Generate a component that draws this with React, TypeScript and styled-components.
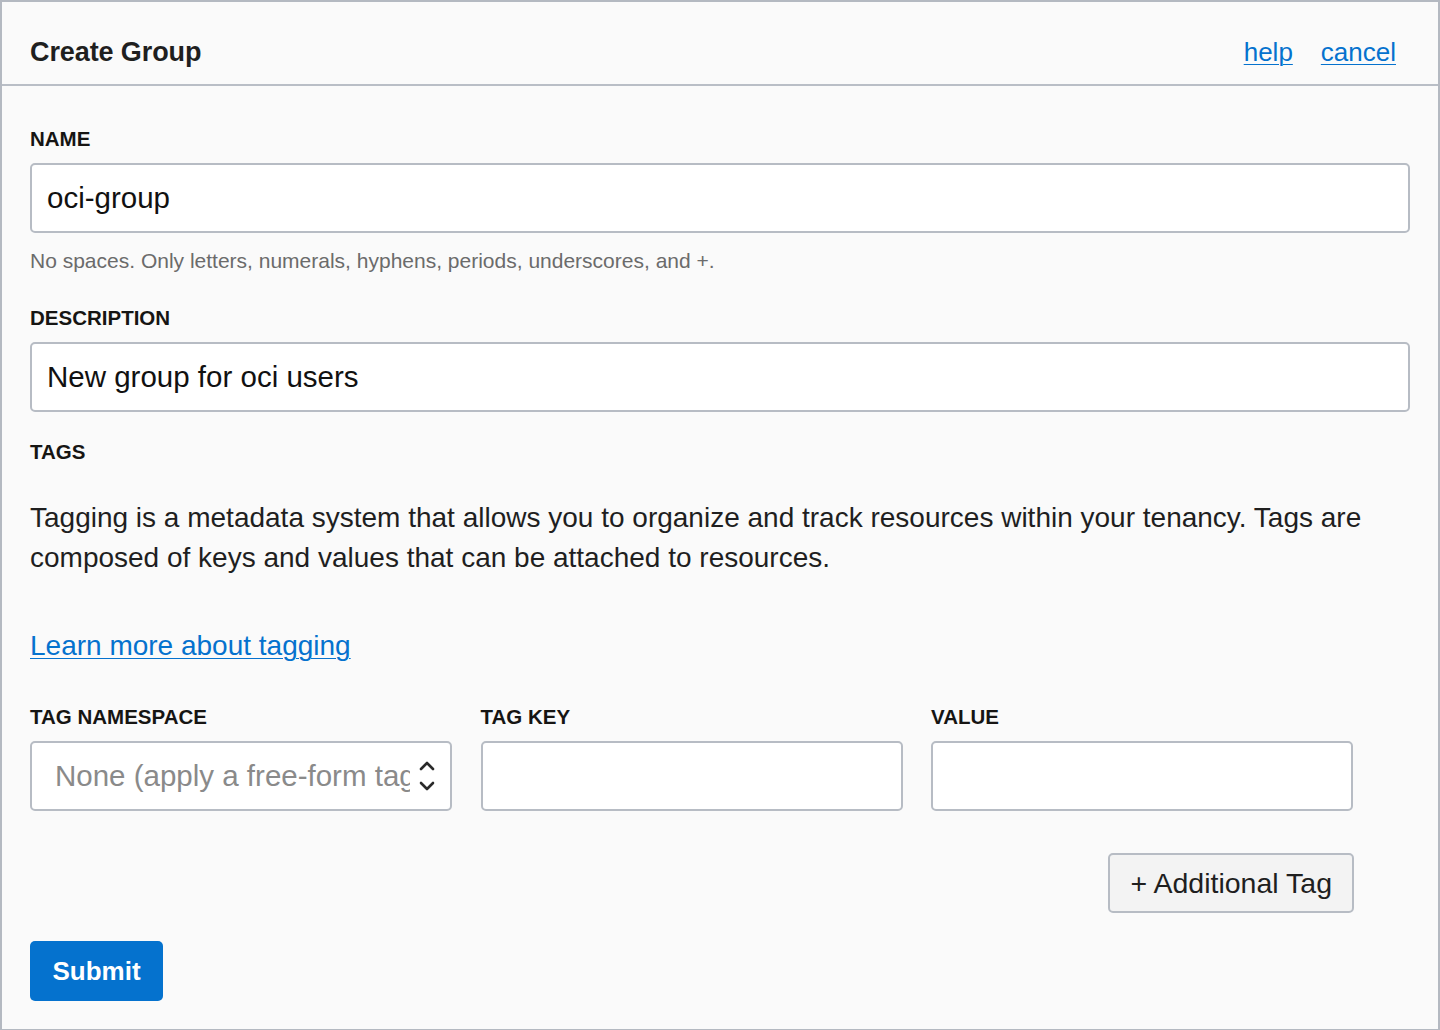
import React from "react";
import styled, { createGlobalStyle } from "styled-components";

const Global = createGlobalStyle`
  html, body { margin: 0; padding: 0; background: #fafafa; }
  * { box-sizing: border-box; }
  body { font-family: "Liberation Sans", Arial, sans-serif; color: #161513; }
`;

const Frame = styled.div`
  width: 1440px;
  height: 1030px;
  border: 2px solid #b4b9c1;
  border-bottom-width: 1px;
  background: #fafafa;
  display: flex;
  flex-direction: column;
`;

const Header = styled.header`
  height: 84px;
  flex: none;
  border-bottom: 2px solid #b9bec6;
  display: flex;
  align-items: center;
  justify-content: space-between;
  padding: 18px 42px 0 28px;
`;

const Title = styled.h1`
  margin: 0;
  font-size: 27px;
  font-weight: 700;
  color: #1f1f1f;
  letter-spacing: -0.1px;
`;

const HeaderLinks = styled.nav`
  display: flex;
  gap: 28px;
`;

const Link = styled.a<{ $size?: number }>`
  color: #0572ce;
  text-decoration: underline;
  text-underline-offset: 3px;
  text-decoration-thickness: 1px;
  font-size: ${(p) => p.$size ?? 26}px;
  line-height: 40px;
  cursor: pointer;
`;

const Body = styled.main`
  padding: 41px 28px 0 28px;
  display: flex;
  flex-direction: column;
`;

const Label = styled.label`
  display: block;
  font-size: 20.5px;
  line-height: 24px;
  font-weight: 700;
  color: #161513;
  margin-bottom: 12px;
`;

const TextInput = styled.div<{ $muted?: boolean }>`
  height: 70px;
  border: 2px solid #b7bcc4;
  border-radius: 5px;
  background: #ffffff;
  display: flex;
  align-items: center;
  padding: 0 15px;
  font-size: 29.5px;
  color: ${(p) => (p.$muted ? "#8a8a8a" : "#111111")};
`;

const Hint = styled.p`
  margin: 16px 0 0;
  font-size: 21px;
  line-height: 24px;
  color: #6b6b6b;
`;

const Field = styled.div<{ $mt?: number }>`
  margin-top: ${(p) => p.$mt ?? 0}px;
`;

const Paragraph = styled.p`
  margin: 34px 0 0;
  font-size: 28px;
  line-height: 40px;
  color: #1f1f1f;
`;

const LearnRow = styled.div`
  margin-top: 48px;
`;

const TagGrid = styled.div`
  margin-top: 39px;
  display: grid;
  grid-template-columns: repeat(3, 422px);
  column-gap: 28.5px;
`;

const Select = styled(TextInput)`
  padding: 0 14px 0 23px;
  justify-content: space-between;
  gap: 8px;
`;

const SelectText = styled.span`
  white-space: nowrap;
  overflow: hidden;
  flex: 1;
  min-width: 0;
  color: #8a8a8a;
`;

const ButtonRow = styled.div`
  margin-top: 42px;
  width: 1324px;
  display: flex;
  justify-content: flex-end;
`;

const SecondaryButton = styled.button`
  height: 60px;
  padding: 0 20px;
  border: 2px solid #b7bcc4;
  border-radius: 5px;
  background: #f3f3f3;
  font-family: "Liberation Sans", Arial, sans-serif;
  font-size: 28.5px;
  color: #1f1f1f;
`;

const PrimaryButton = styled.button`
  margin-top: 28px;
  align-self: flex-start;
  height: 60px;
  width: 133px;
  border: none;
  border-radius: 5px;
  background: #0572ce;
  color: #ffffff;
  font-family: "Liberation Sans", Arial, sans-serif;
  font-size: 26px;
  font-weight: 700;
`;

const Chevrons = () => (
  <svg width="18" height="34" viewBox="0 0 18 34" fill="none">
    <path d="M3 10 L9 4 L15 10" stroke="#2a2a2a" strokeWidth="2.6" strokeLinecap="round" strokeLinejoin="round" />
    <path d="M3 24 L9 30 L15 24" stroke="#2a2a2a" strokeWidth="2.6" strokeLinecap="round" strokeLinejoin="round" />
  </svg>
);

export default function App() {
  return (
    <>
      <Global />
      <Frame>
        <Header>
          <Title>Create Group</Title>
          <HeaderLinks>
            <Link>help</Link>
            <Link>cancel</Link>
          </HeaderLinks>
        </Header>
        <Body>
          <Field>
            <Label>NAME</Label>
            <TextInput>oci-group</TextInput>
            <Hint>No spaces. Only letters, numerals, hyphens, periods, underscores, and +.</Hint>
          </Field>
          <Field $mt={33}>
            <Label>DESCRIPTION</Label>
            <TextInput>New group for oci users</TextInput>
          </Field>
          <Field $mt={28}>
            <Label style={{ marginBottom: 0 }}>TAGS</Label>
            <Paragraph>
              Tagging is a metadata system that allows you to organize and track resources within your tenancy. Tags are composed of keys and values that can be attached to resources.
            </Paragraph>
          </Field>
          <LearnRow>
            <Link $size={28}>Learn more about tagging</Link>
          </LearnRow>
          <TagGrid>
            <div>
              <Label>TAG NAMESPACE</Label>
              <Select $muted>
                <SelectText>None (apply a free-form tag)</SelectText>
                <Chevrons />
              </Select>
            </div>
            <div>
              <Label>TAG KEY</Label>
              <TextInput />
            </div>
            <div>
              <Label>VALUE</Label>
              <TextInput />
            </div>
          </TagGrid>
          <ButtonRow>
            <SecondaryButton>+ Additional Tag</SecondaryButton>
          </ButtonRow>
          <PrimaryButton>Submit</PrimaryButton>
        </Body>
      </Frame>
    </>
  );
}
